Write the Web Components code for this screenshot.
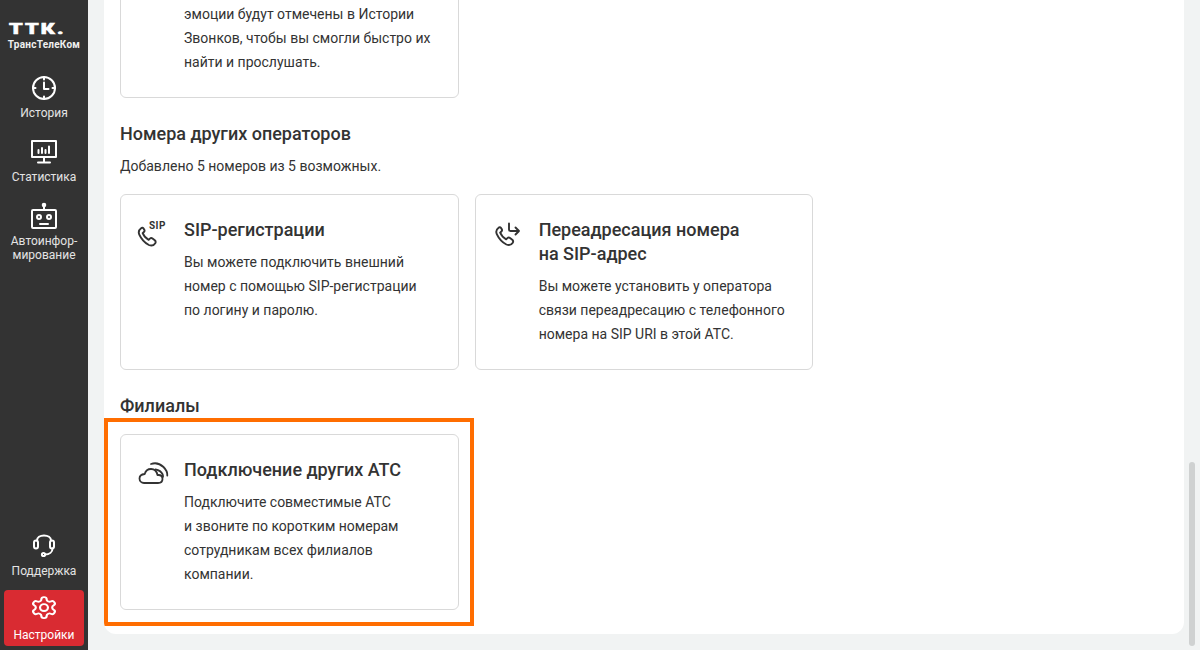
<!DOCTYPE html>
<html lang="ru">
<head>
<meta charset="utf-8">
<title>Настройки</title>
<style>
    html, body { margin: 0; height: 100%; overflow: hidden; }
    body { font-family: Roboto, "Liberation Sans", sans-serif; color: #333; }
</style>
</head>
<body>
<atc-app>
    <atc-sidebar slot="side">
        <nav-item label="История">
            <svg width="30" height="30" viewBox="0 0 30 30" fill="none" stroke="#fff" stroke-width="2" stroke-linecap="round" stroke-linejoin="round"><circle cx="15" cy="15" r="11"/><path d="M15 4v2.500M15 23.500V26M4 15h2.500M23.500 15H26M15 9.500V16h4.500"/></svg>
        </nav-item>
        <nav-item label="Статистика">
            <svg width="30" height="30" viewBox="0 0 30 30" fill="none" stroke="#fff" stroke-width="2" stroke-linecap="round" stroke-linejoin="round"><rect x="3" y="4" width="24" height="16"/><path d="M15 20v5.500M9 25.500h12M9.500 16v-3M13 16v-5M16.500 16v-3M20 16V9.500"/></svg>
        </nav-item>
        <nav-item label="Автоинфор-&#10;мирование">
            <svg width="30" height="30" viewBox="0 0 30 30" fill="none" stroke="#fff" stroke-width="2" stroke-linecap="round" stroke-linejoin="round"><rect x="3" y="9" width="24" height="18" rx="1"/><path d="M15 9V5"/><circle cx="15" cy="4" r="1.300" fill="#fff"/><circle cx="10" cy="16" r="2"/><circle cx="20" cy="16" r="2"/><path d="M11 23h8"/></svg>
        </nav-item>
        <span slot="bottom">
            <nav-item label="Поддержка" compact>
                <svg width="30" height="30" viewBox="0 0 30 30" fill="none" stroke="#fff" stroke-width="2" stroke-linecap="round" stroke-linejoin="round"><path d="M8 9.500C8 6.500 11 4.500 15 4.500s7 2 7 5"/><rect x="5" y="9.500" width="4" height="8" rx="2"/><rect x="21" y="9.500" width="4" height="8" rx="2"/><path d="M23.500 17.500c0 3.500-3 6-7.500 6"/><circle cx="14.500" cy="23.500" r="1.600"/></svg>
            </nav-item>
            <nav-item label="Настройки" active>
                <svg width="30" height="30" viewBox="-.5 0 25 28.600" preserveAspectRatio="none" fill="none" stroke="#fff" stroke-width="1.800" stroke-linecap="round" stroke-linejoin="round"><path d="M12.220 2h-.44a2 2 0 0 0-2 2v.18a2 2 0 0 1-1 1.730l-.43.25a2 2 0 0 1-2 0l-.15-.08a2 2 0 0 0-2.730.73l-.22.38a2 2 0 0 0 .73 2.730l.15.1a2 2 0 0 1 1 1.720v.51a2 2 0 0 1-1 1.740l-.15.09a2 2 0 0 0-.73 2.730l.22.38a2 2 0 0 0 2.730.73l.15-.08a2 2 0 0 1 2 0l.43.25a2 2 0 0 1 1 1.730V20a2 2 0 0 0 2 2h.44a2 2 0 0 0 2-2v-.18a2 2 0 0 1 1-1.730l.43-.25a2 2 0 0 1 2 0l.15.08a2 2 0 0 0 2.730-.73l.22-.39a2 2 0 0 0-.73-2.730l-.15-.08a2 2 0 0 1-1-1.740v-.5a2 2 0 0 1 1-1.740l.15-.09a2 2 0 0 0 .73-2.730l-.22-.38a2 2 0 0 0-2.730-.73l-.15.08a2 2 0 0 1-2 0l-.43-.25a2 2 0 0 1-1-1.730V4a2 2 0 0 0-2-2z"/><circle cx="12" cy="12" r="3.300"/></svg>
            </nav-item>
        </span>
    </atc-sidebar>

    <section-grid>
        <feature-card clipped>
            эмоции будут отмечены в Истории<br>Звонков, чтобы вы смогли быстро их<br>найти и прослушать.
        </feature-card>
    </section-grid>

    <section-grid heading="Номера других операторов" note="Добавлено 5 номеров из 5 возможных.">
        <feature-card title-html="SIP-регистрации">
            <svg slot="icon" width="36" height="30" viewBox="0 0 36 30" fill="none" stroke="#333" stroke-linecap="round" stroke-linejoin="round"><path stroke-width="1.600" transform="translate(-1.500 0) scale(1.200)" d="M5.500 8.500C3.500 10 3 11.500 4 13.800c1.700 3.700 4.300 6.700 8 8.700 2.200 1 4 .5 5.300-1.500.6-1 .4-1.700-.4-2.400l-1.900-1.500c-.8-.6-1.500-.5-2.200.1l-1 1c-2.400-1.200-4-3.200-5-5.500l1-1c.7-.7.8-1.400.2-2.200L7.500 8.700c-.6-.7-1.300-.8-2-.2z"/><text x="13" y="11" font-family="Roboto, sans-serif" font-size="10" font-weight="700" letter-spacing=".4" fill="#333" stroke="none">SIP</text></svg>
            Вы можете подключить внешний<br>номер с помощью SIP-регистрации<br>по логину и паролю.
        </feature-card>
        <feature-card title-html="Переадресация номера&lt;br&gt;на SIP-адрес">
            <svg slot="icon" width="36" height="30" viewBox="0 0 36 30" fill="none" stroke="#333" stroke-linecap="round" stroke-linejoin="round"><path stroke-width="1.600" transform="translate(1 -.5) scale(1.200)" d="M5.500 8.500C3.500 10 3 11.500 4 13.800c1.700 3.700 4.300 6.700 8 8.700 2.200 1 4 .5 5.300-1.500.6-1 .4-1.700-.4-2.400l-1.900-1.500c-.8-.6-1.500-.5-2.200.1l-1 1c-2.400-1.200-4-3.200-5-5.500l1-1c.7-.7.8-1.400.2-2.200L7.500 8.700c-.6-.7-1.300-.8-2-.2z"/><path stroke-width="1.900" d="M18 5.500v6c0 1 .5 1.500 1.500 1.500H28M24.500 9.500 28 13l-3.500 3.500"/></svg>
            Вы можете установить у оператора<br>связи переадресацию с телефонного<br>номера на SIP URI в этой АТС.
        </feature-card>
    </section-grid>

    <section-grid heading="Филиалы">
        <feature-card title-html="Подключение других АТС" marked>
            <svg slot="icon" width="36" height="30" viewBox="0 0 36 30" fill="none" stroke="#333" stroke-width="1.800" stroke-linecap="round" stroke-linejoin="round"><path d="M8 25h14c2.800 0 4.500-1.800 4.500-4 0-2.300-1.700-4-4-4h-1c-.7-3.500-3.200-6-6.500-6-3 0-5.500 2-6.300 5C5.500 16.300 3.500 18 3.500 20.500 3.500 23 5.500 25 8 25z"/><path d="M15 6c4-1.500 9-.3 12.500 3 2.500 2.500 4 5.500 3.800 8.500M19.500 11.500c3 .5 6 2.500 7.200 5 .3.800.4 1.600.3 2.300"/></svg>
            Подключите совместимые АТС<br>и звоните по коротким номерам<br>сотрудникам всех филиалов<br>компании.
        </feature-card>
    </section-grid>
</atc-app>

<script>
    // Корневой каркас: боковая панель, белая панель с содержимым и ползунок
    class AtcApp extends HTMLElement {
        constructor() {
            super();
            this.attachShadow({ mode: 'open' });
            this.shadowRoot.innerHTML = `
            <style>
                :host { display: flex; height: 650px; background: #f1f3f3; position: relative; overflow: hidden; }
                main { flex: 1; min-width: 0; padding: 0 16px 16px; display: flex; }
                .panel {
                    flex: 1; min-width: 0; background: #fff; border-radius: 0 0 12px 12px;
                    padding: 0 16px 24px; display: flex; flex-direction: column;
                    justify-content: flex-end; gap: 24px; overflow: hidden;
                }
                .thumb {
                    position: absolute; right: 5px; top: 462px; width: 6px; height: 184px;
                    background: #cfd1d1; border-radius: 3px;
                }
            </style>
            <slot name="side"></slot>
            <main><div class="panel"><slot></slot></div></main>
            <div class="thumb"></div>`;
        }
    }

    class AtcSidebar extends HTMLElement {
        constructor() {
            super();
            this.attachShadow({ mode: 'open' });
            this.shadowRoot.innerHTML = `
            <style>
                :host { display: flex; flex-direction: column; flex: none; width: 88px; height: 650px; box-sizing: border-box; background: #333; padding: 0 4px 4px; }
                .logo { color: #fff; height: 73px; box-sizing: border-box; padding-top: 21px; }
                .ttk { font: 900 15.5px/16px Roboto, sans-serif; letter-spacing: 1.5px; -webkit-text-stroke: .6px #fff; transform: scaleX(1.4); transform-origin: 5px 0; padding-left: 5px; white-space: nowrap; }
                .sub { font: 700 10px/12px Roboto, sans-serif; color: #f0f0f0; letter-spacing: .25px; margin-top: 2px; white-space: nowrap; text-align: center; }
                .top { display: flex; flex-direction: column; }
                .bottom { margin-top: auto; display: flex; flex-direction: column; }
            </style>
            <div class="logo"><div class="ttk">ТТК.</div><div class="sub">ТрансТелеКом</div></div>
            <div class="top"><slot></slot></div>
            <div class="bottom"><slot name="bottom"></slot></div>`;
        }
    }

    class NavItem extends HTMLElement {
        constructor() {
            super();
            this.attachShadow({ mode: 'open' });
        }

        connectedCallback() {
            const label = this.getAttribute('label') || '';
            this.shadowRoot.innerHTML = `
            <style>
                :host { display: flex; flex-direction: column; align-items: center; width: 80px; color: #e4e4e4; padding-bottom: 17px; font: 400 12px/14px Roboto, sans-serif; }
                :host([compact]) { padding-bottom: 10px; }
                :host([active]) { background: #d92b32; color: #fff; border-radius: 4px; height: 56px; padding: 5px 0 0; box-sizing: border-box; margin-top: 2px; }
                .icon { height: 30px; margin-bottom: 3px; }
                ::slotted(svg) { display: block; }
                .label { white-space: pre-line; text-align: center; }
            </style>
            <div class="icon"><slot></slot></div>
            <div class="label"></div>`;
            this.shadowRoot.querySelector('.label').textContent = label;
        }
    }

    // Секция: заголовок, необязательная подпись и сетка карточек в три колонки
    class SectionGrid extends HTMLElement {
        constructor() {
            super();
            this.attachShadow({ mode: 'open' });
        }

        connectedCallback() {
            const heading = this.getAttribute('heading');
            const note = this.getAttribute('note');
            this.shadowRoot.innerHTML = `
            <style>
                :host { display: block; flex: none; }
                h2 { margin: 0 0 16px; font: 500 18px/24px Roboto, sans-serif; color: #333; }
                p { margin: -8px 0 16px; font: 400 14px/24px Roboto, sans-serif; color: #333; }
                .grid { display: grid; grid-template-columns: repeat(3, 1fr); gap: 16px; }
            </style>
            ${heading ? `<h2>${heading}</h2>` : ''}
            ${note ? `<p>${note}</p>` : ''}
            <div class="grid"><slot></slot></div>`;
        }
    }

    class FeatureCard extends HTMLElement {
        constructor() {
            super();
            this.attachShadow({ mode: 'open' });
        }

        connectedCallback() {
            const title = this.getAttribute('title-html');
            this.shadowRoot.innerHTML = `
            <style>
                :host { display: flex; position: relative; box-sizing: border-box; min-height: 176px; border: 1px solid #d9d9d9; border-radius: 6px; padding: 23px 16px 23px 15px; background: #fff; }
                :host([clipped]) { min-height: 0; }
                .icon { flex: none; width: 36px; margin-right: 12px; }
                ::slotted(svg) { display: block; }
                h3 { margin: 0 0 8px; font: 500 18px/24px Roboto, sans-serif; color: #333; }
                .text { font: 400 14px/24px Roboto, sans-serif; color: #333; white-space: nowrap; }
                :host([marked])::after { content: ""; position: absolute; inset: -17px -16px -17px -17px; border: 4px solid #ff6d00; pointer-events: none; }
            </style>
            <div class="icon"><slot name="icon"></slot></div>
            <div>
                ${title ? `<h3>${title}</h3>` : ''}
                <div class="text"><slot></slot></div>
            </div>`;
        }
    }

    window.customElements.define('atc-app', AtcApp);
    window.customElements.define('atc-sidebar', AtcSidebar);
    window.customElements.define('nav-item', NavItem);
    window.customElements.define('section-grid', SectionGrid);
    window.customElements.define('feature-card', FeatureCard);
</script>
</body>
</html>
